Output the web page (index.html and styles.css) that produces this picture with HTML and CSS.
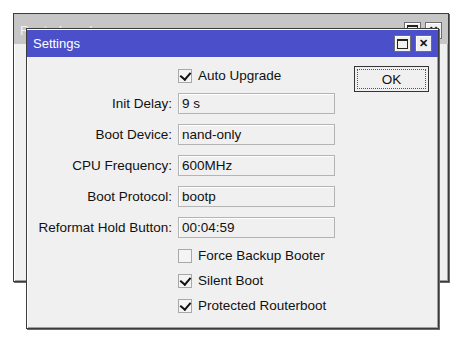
FILE: index.html
```html
<!DOCTYPE html>
<html lang="en">
<head>
    <meta charset="UTF-8">
    <title>Settings</title>
    <link rel="stylesheet" href="styles.css">
</head>
<body>
    <div class="desktop">
        <!-- window behind -->
        <div class="window back">
            <div class="titlebar back-title">
                <span class="title">Routerboard</span>
                <div class="title-buttons">
                    <span class="tbtn"><span class="max-icon"></span></span>
                    <span class="tbtn close">&#x2715;</span>
                </div>
            </div>
        </div>

        <!-- settings dialog -->
        <div class="window front">
            <div class="titlebar front-title">
                <span class="title">Settings</span>
                <div class="title-buttons">
                    <span class="tbtn"><span class="max-icon"></span></span>
                    <span class="tbtn close">&#x2715;</span>
                </div>
            </div>

            <div class="form">
                <div class="label"></div>
                <label class="check-row"><span class="box checked"></span>Auto Upgrade</label>
                <button class="ok-button"><span>OK</span></button>

                <div class="label">Init Delay:</div>
                <div class="field">9 s</div>

                <div class="label">Boot Device:</div>
                <div class="field">nand-only</div>

                <div class="label">CPU Frequency:</div>
                <div class="field">600MHz</div>

                <div class="label">Boot Protocol:</div>
                <div class="field">bootp</div>

                <div class="label">Reformat Hold Button:</div>
                <div class="field">00:04:59</div>

                <div class="label"></div>
                <label class="check-row"><span class="box"></span>Force Backup Booter</label>

                <div class="label"></div>
                <label class="check-row"><span class="box checked"></span>Silent Boot</label>

                <div class="label"></div>
                <label class="check-row"><span class="box checked"></span>Protected Routerboot</label>
            </div>
        </div>
    </div>
</body>
</html>
```

FILE: styles.css
```css
* {
    margin: 0;
    padding: 0;
    box-sizing: border-box;
}

body {
    background-color: #fff;
    font-family: "Liberation Sans", Arial, sans-serif;
    font-size: 13.5px;
    color: #111;
}

.desktop {
    position: relative;
    width: 470px;
    height: 354px;
}

/* windows sit on a free desktop */
.window {
    position: absolute;
    background-color: #f0f0f0;
    border: 1px solid #3c3c3c;
    box-shadow: inset 1px 1px 0 #fff, inset -1px -1px 0 #a0a0a0, 1px 1px 0 #6a6a6a;
}

.back {
    left: 13px;
    top: 13px;
    width: 436px;
    height: 269px;
}

.front {
    left: 26px;
    top: 28px;
    width: 413px;
    height: 301px;
}

.titlebar {
    display: flex;
    align-items: center;
    justify-content: space-between;
    height: 27px;
    padding: 0 6px 0 6px;
}

.back-title {
    background-color: #c6c6c6;
    color: #f4f4f4;
    height: 30px;
    padding-top: 2px;
}

.front-title {
    margin: 1px 0 0 0;
    background-color: #4b4fc9;
    color: #fff;
}

.title {
    font-size: 13px;
}

.title-buttons {
    display: flex;
    gap: 4px;
}

.tbtn {
    width: 17px;
    height: 17px;
    background-color: #f0f0f0;
    border: 1px solid #6e6e6e;
    box-shadow: inset 1px 1px 0 #fff;
    display: flex;
    align-items: center;
    justify-content: center;
    color: #111;
}

.max-icon {
    width: 11px;
    height: 10px;
    border: 1px solid #222;
    border-top-width: 2px;
}

.close {
    font-size: 11px;
    font-weight: bold;
}

/* dialog body */
.form {
    display: grid;
    grid-template-columns: 137px 157px 75px;
    grid-template-rows: 25px repeat(5, 31px) repeat(3, 25px);
    column-gap: 6px;
    padding: 6px 0 0 8px;
}

.form > :nth-child(3) {
    margin-left: 13px;
}

.label {
    grid-column: 1;
    text-align: right;
    align-self: center;
    white-space: nowrap;
}

.field {
    grid-column: 2;
    align-self: center;
    height: 21px;
    line-height: 19px;
    padding: 0 3px;
    border: 1px solid #b4b4b4;
    background-color: #f0f0f0;
    box-shadow: inset 1px 1px 0 #fff;
}

.check-row {
    grid-column: 2 / span 1;
    display: flex;
    align-items: center;
    gap: 6px;
    white-space: nowrap;
}

.box {
    width: 14px;
    height: 14px;
    border: 1px solid #a8a8a8;
    background-color: #f4f4f4;
    position: relative;
}

.box.checked::after {
    content: "";
    position: absolute;
    left: 2px;
    top: 1px;
    width: 5px;
    height: 8px;
    border-right: 2px solid #111;
    border-bottom: 2px solid #111;
    transform: translate(1px, -1px) rotate(40deg);
}

.ok-button {
    grid-column: 3;
    grid-row: 1 / span 2;
    align-self: start;
    margin-top: 3px;
    height: 26px;
    width: 75px;
    padding: 2px;
    border: 1px solid #333;
    background-color: #f0f0f0;
    font-family: inherit;
    font-size: 13.5px;
    color: #111;
}

.ok-button span {
    display: flex;
    align-items: center;
    justify-content: center;
    height: 100%;
    border: 1px dotted #555;
}
```
